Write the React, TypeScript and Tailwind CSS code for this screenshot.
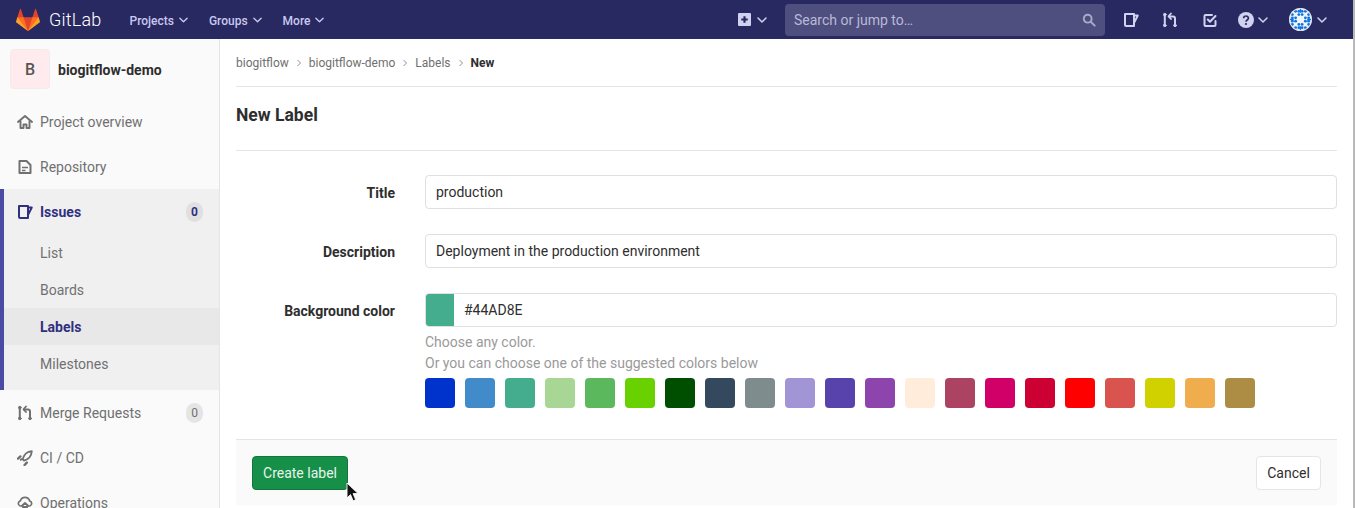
import type { ReactNode } from "react";

const swatches = [
  "#0033CC", "#428BCA", "#44AD8E", "#A8D695", "#5CB85C", "#69D100", "#004E00",
  "#34495E", "#7F8C8D", "#A295D6", "#5843AD", "#8E44AD", "#FFECDB", "#AD4363",
  "#D10069", "#CC0033", "#FF0000", "#D9534F", "#D1D100", "#F0AD4E", "#AD8D43",
];

function Chevron({ className = "w-[10px]" }: { className?: string }) {
  return (
    <svg viewBox="0 0 10 6" className={`h-[6px] ${className}`} fill="none" stroke="currentColor" strokeWidth="1.5" strokeLinecap="round" strokeLinejoin="round">
      <path d="M1 1l4 4 4-4" />
    </svg>
  );
}

function Tanuki() {
  return (
    <svg viewBox="0 0 36 36" className="w-6 h-6">
      <path fill="#e24329" d="M2 14l9.38 9v-9l-4-12.28c-.205-.632-1.176-.632-1.38 0z" />
      <path fill="#e24329" d="M34 14l-9.38 9v-9l4-12.28c.205-.632 1.176-.632 1.38 0z" />
      <path fill="#e24329" d="M18 34.38 3 14h30z" />
      <path fill="#fc6d26" d="M18 34.38 11.38 14H2l4 11z" />
      <path fill="#fc6d26" d="M18 34.38 24.62 14H34l-4 11z" />
      <path fill="#fca326" d="M2 14L.1 20.16c-.18.565 0 1.2.5 1.56l17.42 12.66z" />
      <path fill="#fca326" d="M34 14l1.9 6.16c.18.565 0 1.2-.5 1.56L18 34.38z" />
    </svg>
  );
}

function IssueIcon({ className = "" }: { className?: string }) {
  return (
    <svg viewBox="0 0 16 16" className={`w-4 h-4 ${className}`} fill="none" stroke="currentColor" strokeWidth="2" strokeLinejoin="round">
      <path d="M2 2h9v12H3a1 1 0 0 1-1-1z" />
      <path d="M11 3.5h3.8L11 11" strokeWidth="1.9" />
    </svg>
  );
}

function MergeIcon({ className = "" }: { className?: string }) {
  return (
    <svg viewBox="0 0 16 16" className={`w-4 h-4 ${className}`} fill="none" stroke="currentColor" strokeWidth="2" strokeLinecap="round" strokeLinejoin="round">
      <circle cx="2.8" cy="2.6" r="1.3" fill="currentColor" strokeWidth="1" />
      <circle cx="2.8" cy="13.4" r="1.3" fill="currentColor" strokeWidth="1" />
      <circle cx="13" cy="13.4" r="1.3" fill="currentColor" strokeWidth="1" />
      <path d="M2.8 3v10" />
      <path d="M13 13V6.5a2 2 0 0 0-2-2H7.5" />
      <path d="M9 1.5L6.5 4.3 9 7" strokeWidth="1.8" />
    </svg>
  );
}

function TodoIcon({ className = "" }: { className?: string }) {
  return (
    <svg viewBox="0 0 16 16" className={`w-4 h-4 ${className}`} fill="none" stroke="currentColor" strokeWidth="2" strokeLinecap="round" strokeLinejoin="round">
      <path d="M13.5 9v4a1 1 0 0 1-1 1h-9a1 1 0 0 1-1-1V4a1 1 0 0 1 1-1H10" />
      <path d="M5.8 7.5L8 9.7l5.5-5.7" />
    </svg>
  );
}

function HomeIcon() {
  return (
    <svg viewBox="0 0 16 16" className="w-4 h-4" fill="none" stroke="currentColor" strokeWidth="1.9" strokeLinejoin="round" strokeLinecap="round">
      <path d="M1 8l7-6 7 6" />
      <path d="M3.5 7v7h3v-3.5h3V14h3V7" />
    </svg>
  );
}

function DocIcon() {
  return (
    <svg viewBox="0 0 16 16" className="w-4 h-4" fill="none" stroke="currentColor" strokeWidth="2" strokeLinejoin="round">
      <path d="M2.5 2h7l4 4v8h-11z" />
      <path d="M5 8.5h6M5 11.5h3.5" strokeWidth="1.6" />
    </svg>
  );
}

function RocketIcon() {
  return (
    <svg viewBox="0 0 16 16" className="w-4 h-4" fill="none" stroke="currentColor" strokeWidth="1.8" strokeLinecap="round" strokeLinejoin="round">
      <path d="M14.8 1.2C10.5 1.5 7 4.5 5.6 9.2l1.4 1.4c4.6-1.4 7.5-5 7.8-9.4z" />
      <path d="M3.4 6.4L1 8.6" strokeWidth="2.4" />
      <path d="M4.2 9.2L3.8 9.8" strokeWidth="2" />
      <path d="M9.8 12.6L7.6 15" strokeWidth="2.4" />
    </svg>
  );
}

function CloudIcon() {
  return (
    <svg viewBox="0 0 16 16" className="w-4 h-4" fill="none" stroke="currentColor" strokeWidth="1.7" strokeLinecap="round" strokeLinejoin="round">
      <path d="M3.2 11a2.7 2.7 0 0 1 .2-5.2A4.8 4.8 0 0 1 12.6 5.8a2.7 2.7 0 0 1 .2 5.2" />
      <path d="M4.6 11L8 8l3.4 3" />
      <path d="M6 11v3.6h4V11" fill="currentColor" />
    </svg>
  );
}

function Globe() {
  const dots: ReactNode[] = [];
  for (let y = 0; y < 6; y++) {
    for (let x = 0; x < 6; x++) {
      if (x + y === 5 || x === y) continue;
      dots.push(<circle key={`${x}-${y}`} cx={3.5 + x * 3.4} cy={3.5 + y * 3.4} r="1.5" fill="#0f74e0" />);
    }
  }
  return (
    <svg viewBox="0 0 24 24" className="w-[23px] h-[23px] rounded-full bg-[#f0f4fb]">
      {dots}
      <path d="M12 1v4M12 19v4M1 12h4M19 12h4" stroke="#0f74e0" strokeWidth="1.4" />
      <circle cx="12" cy="12" r="11.5" fill="none" stroke="#d5d8e6" strokeWidth="1" />
    </svg>
  );
}

function SideItem({ icon, label, count }: { icon: ReactNode; label: string; count?: string }) {
  return (
    <div className="h-[45px] flex items-center pl-[17px] pr-4 text-[#707070]">
      <span className="w-4 mr-[7px]">{icon}</span>
      <span className="flex-1 text-[14px] pt-[2px]">{label}</span>
      {count && <span className="w-[17px] h-5 rounded-full bg-[#e5e5e5] text-[12px] flex items-center justify-center">{count}</span>}
    </div>
  );
}

function Crumb({ children }: { children: string }) {
  return (
    <>
      <span>{children}</span>
      <svg viewBox="0 0 6 8" className="w-[6px] h-2 mx-[7px] text-[#909090]" fill="none" stroke="currentColor" strokeWidth="1">
        <path d="M1.5 1l3 3-3 3" />
      </svg>
    </>
  );
}

function FormRow({ label, children }: { label: string; children: ReactNode }) {
  return (
    <div className="flex">
      <label className="w-[159px] h-[34px] pt-[2px] flex items-center justify-end font-bold text-[14px] text-[#2e2e2e]">{label}</label>
      <div className="flex-1 ml-[30px]">{children}</div>
    </div>
  );
}

function TextField({ value }: { value: string }) {
  return (
    <div className="h-[34px] border border-[#e0e0e0] rounded-[4px] px-[10px] flex items-center text-[14px] text-[#2e2e2e]">
      {value}
    </div>
  );
}

export default function App() {
  return (
    <div className="h-[508px] overflow-hidden flex bg-white font-['Roboto',sans-serif] text-[#2e2e2e]">
      <div className="flex-1 min-w-0">
        <header className="h-[39px] bg-[#292961] flex items-center text-[#d1d1f0]">
          <div className="ml-4 flex items-center text-white">
            <Tanuki />
            <span className="ml-[9px] text-[18px] font-light tracking-[0.2px]">GitLab</span>
          </div>
          <nav className="ml-7 flex items-center gap-[21px] text-[12px] font-medium text-[#c8c8ee]">
            <span className="flex items-center gap-[5px]"><span className="pt-[2px]">Projects</span> <Chevron className="w-[9px]" /></span>
            <span className="flex items-center gap-[5px]"><span className="pt-[2px]">Groups</span> <Chevron className="w-[9px]" /></span>
            <span className="flex items-center gap-[5px]"><span className="pt-[2px]">More</span> <Chevron className="w-[9px]" /></span>
          </nav>
          <div className="ml-auto flex items-center">
            <svg viewBox="1 1 12 12" className="w-[13px] h-[13px] text-[#d1d1f0]">
              <path fill="currentColor" fillRule="evenodd" d="M2 1h10a1 1 0 0 1 1 1v10a1 1 0 0 1-1 1H2a1 1 0 0 1-1-1V2a1 1 0 0 1 1-1zm4 3v2H4v2h2v2h2V8h2V6H8V4z" />
            </svg>
            <Chevron className="w-[10px] ml-[6px]" />
            <div className="ml-[18px] w-[320px] h-[32px] rounded-[4px] bg-[#4f4f7f] flex items-center px-[9px] text-[14px] text-[#b9b9d8]">
              <span className="flex-1 pt-[2px]">Search or jump to…</span>
              <svg viewBox="0 0 16 16" className="w-[14px] h-[14px] text-[#a9a9c8]" fill="none" stroke="currentColor" strokeWidth="2.2" strokeLinecap="round">
                <circle cx="6.5" cy="6.5" r="4.5" />
                <path d="M10 10l4.5 4.5" />
              </svg>
            </div>
            <IssueIcon className="ml-[18px]" />
            <MergeIcon className="ml-[23px]" />
            <TodoIcon className="ml-[24px]" />
            <svg viewBox="0 0 16 16" className="ml-[20px] w-4 h-4 text-[#d1d1f0]">
              <circle cx="8" cy="8" r="8" fill="currentColor" />
              <path d="M5.6 6.2A2.4 2.4 0 0 1 8 4a2.3 2.3 0 0 1 2.4 2.2c0 1.9-2.4 1.8-2.4 3.6" fill="none" stroke="#292961" strokeWidth="1.7" />
              <circle cx="8" cy="12" r="1.1" fill="#292961" />
            </svg>
            <Chevron className="w-[10px] ml-[4px]" />
            <span className="ml-[21px]"><Globe /></span>
            <Chevron className="w-[10px] ml-[5px] mr-[26px]" />
          </div>
        </header>

        <div className="flex h-[469px]">
          <aside className="w-[220px] shrink-0 bg-[#fafafa] border-r border-[#e5e5e5] overflow-hidden">
            <div className="h-[60px] flex items-center pl-[10px]">
              <div className="w-10 h-10 pt-[2px] rounded-[4px] bg-[#ffebee] border border-[#f5eaea] flex items-center justify-center text-[16px] font-medium text-[#555555]">B</div>
              <span className="ml-2 pt-[2px] text-[14px] font-bold text-[#2e2e2e]">biogitflow-demo</span>
            </div>
            <SideItem icon={<HomeIcon />} label="Project overview" />
            <SideItem icon={<DocIcon />} label="Repository" />
            <div className="h-[201px] bg-[#f0f0f0] border-l-4 border-[#4b4ba3] text-[14px] text-[#707070]">
              <div className="h-[45px] flex items-center pl-[13px] pr-4 text-[#303080] font-bold">
                <IssueIcon className="mr-[7px]" />
                <span className="flex-1 pt-[2px]">Issues</span>
                <span className="w-[17px] h-5 rounded-full bg-[#e0e0e0] text-[12px] flex items-center justify-center">0</span>
              </div>
              <div className="h-[37px] pt-[2px] flex items-center pl-9">List</div>
              <div className="h-[37px] pt-[2px] flex items-center pl-9">Boards</div>
              <div className="h-[37px] pt-[2px] flex items-center pl-9 bg-[#e8e8e8] text-[#303080] font-bold">Labels</div>
              <div className="h-[37px] pt-[2px] flex items-center pl-9">Milestones</div>
            </div>
            <SideItem icon={<MergeIcon />} label="Merge Requests" count="0" />
            <SideItem icon={<RocketIcon />} label="CI / CD" />
            <SideItem icon={<CloudIcon />} label="Operations" />
          </aside>

          <main className="flex-1 px-4 min-w-0">
            <div className="h-12 border-b border-[#e5e5e5] flex items-center text-[12px] text-[#707070]">
              <Crumb>biogitflow</Crumb>
              <Crumb>biogitflow-demo</Crumb>
              <Crumb>Labels</Crumb>
              <span className="font-bold text-[#2e2e2e]">New</span>
            </div>
            <div className="h-[64px] border-b border-[#e5e5e5] flex items-center pb-[7px] text-[17.5px] font-bold text-[#2e2e2e]">New Label</div>
            <div className="pt-6 flex flex-col gap-[25px]">
              <FormRow label="Title"><TextField value="production" /></FormRow>
              <FormRow label="Description"><TextField value="Deployment in the production environment" /></FormRow>
              <FormRow label="Background color">
                <div className="flex h-[34px] border border-[#e0e0e0] rounded-[4px] text-[14px] text-[#2e2e2e] overflow-hidden">
                  <div className="w-[28px] bg-[#44AD8E]" />
                  <div className="flex-1 px-[10px] flex items-center">#44AD8E</div>
                </div>
                <p className="mt-[5px] text-[14px] leading-[21px] text-[#9a9a9a]">Choose any color.</p>
                <p className="text-[14px] leading-[21px] text-[#9a9a9a]">Or you can choose one of the suggested colors below</p>
                <div className="mt-[4px] flex gap-[10px]">
                  {swatches.map((c) => (
                    <div key={c} className="w-[30px] h-[30px] rounded-[4px]" style={{ backgroundColor: c }} />
                  ))}
                </div>
              </FormRow>
            </div>
            <div className="mt-[31px] h-[66px] border-t border-[#e5e5e5] bg-[#fafafa] flex items-center justify-between px-4 text-[14px]">
              <div className="relative">
                <button className="h-[34px] w-[96px] pt-[2px] rounded-[4px] bg-[#168f48] border border-[#12753a] text-[#e8f5ec]">Create label</button>
                <svg viewBox="0 0 13 20" className="absolute left-[94px] top-[26px] w-[13px] h-5">
                  <path d="M1 1v15l3.5-3.4 2.6 6.2 2.6-1.1-2.6-6.1h5z" fill="#111111" stroke="#ffffff" strokeWidth="0.9" />
                </svg>
              </div>
              <button className="h-[34px] w-[65px] pt-[2px] rounded-[4px] bg-white border border-[#e5e5e5] text-[#2e2e2e]">Cancel</button>
            </div>
          </main>
        </div>
      </div>
      <div className="w-[2px] shrink-0 bg-[#b8b8b8]" />
    </div>
  );
}
